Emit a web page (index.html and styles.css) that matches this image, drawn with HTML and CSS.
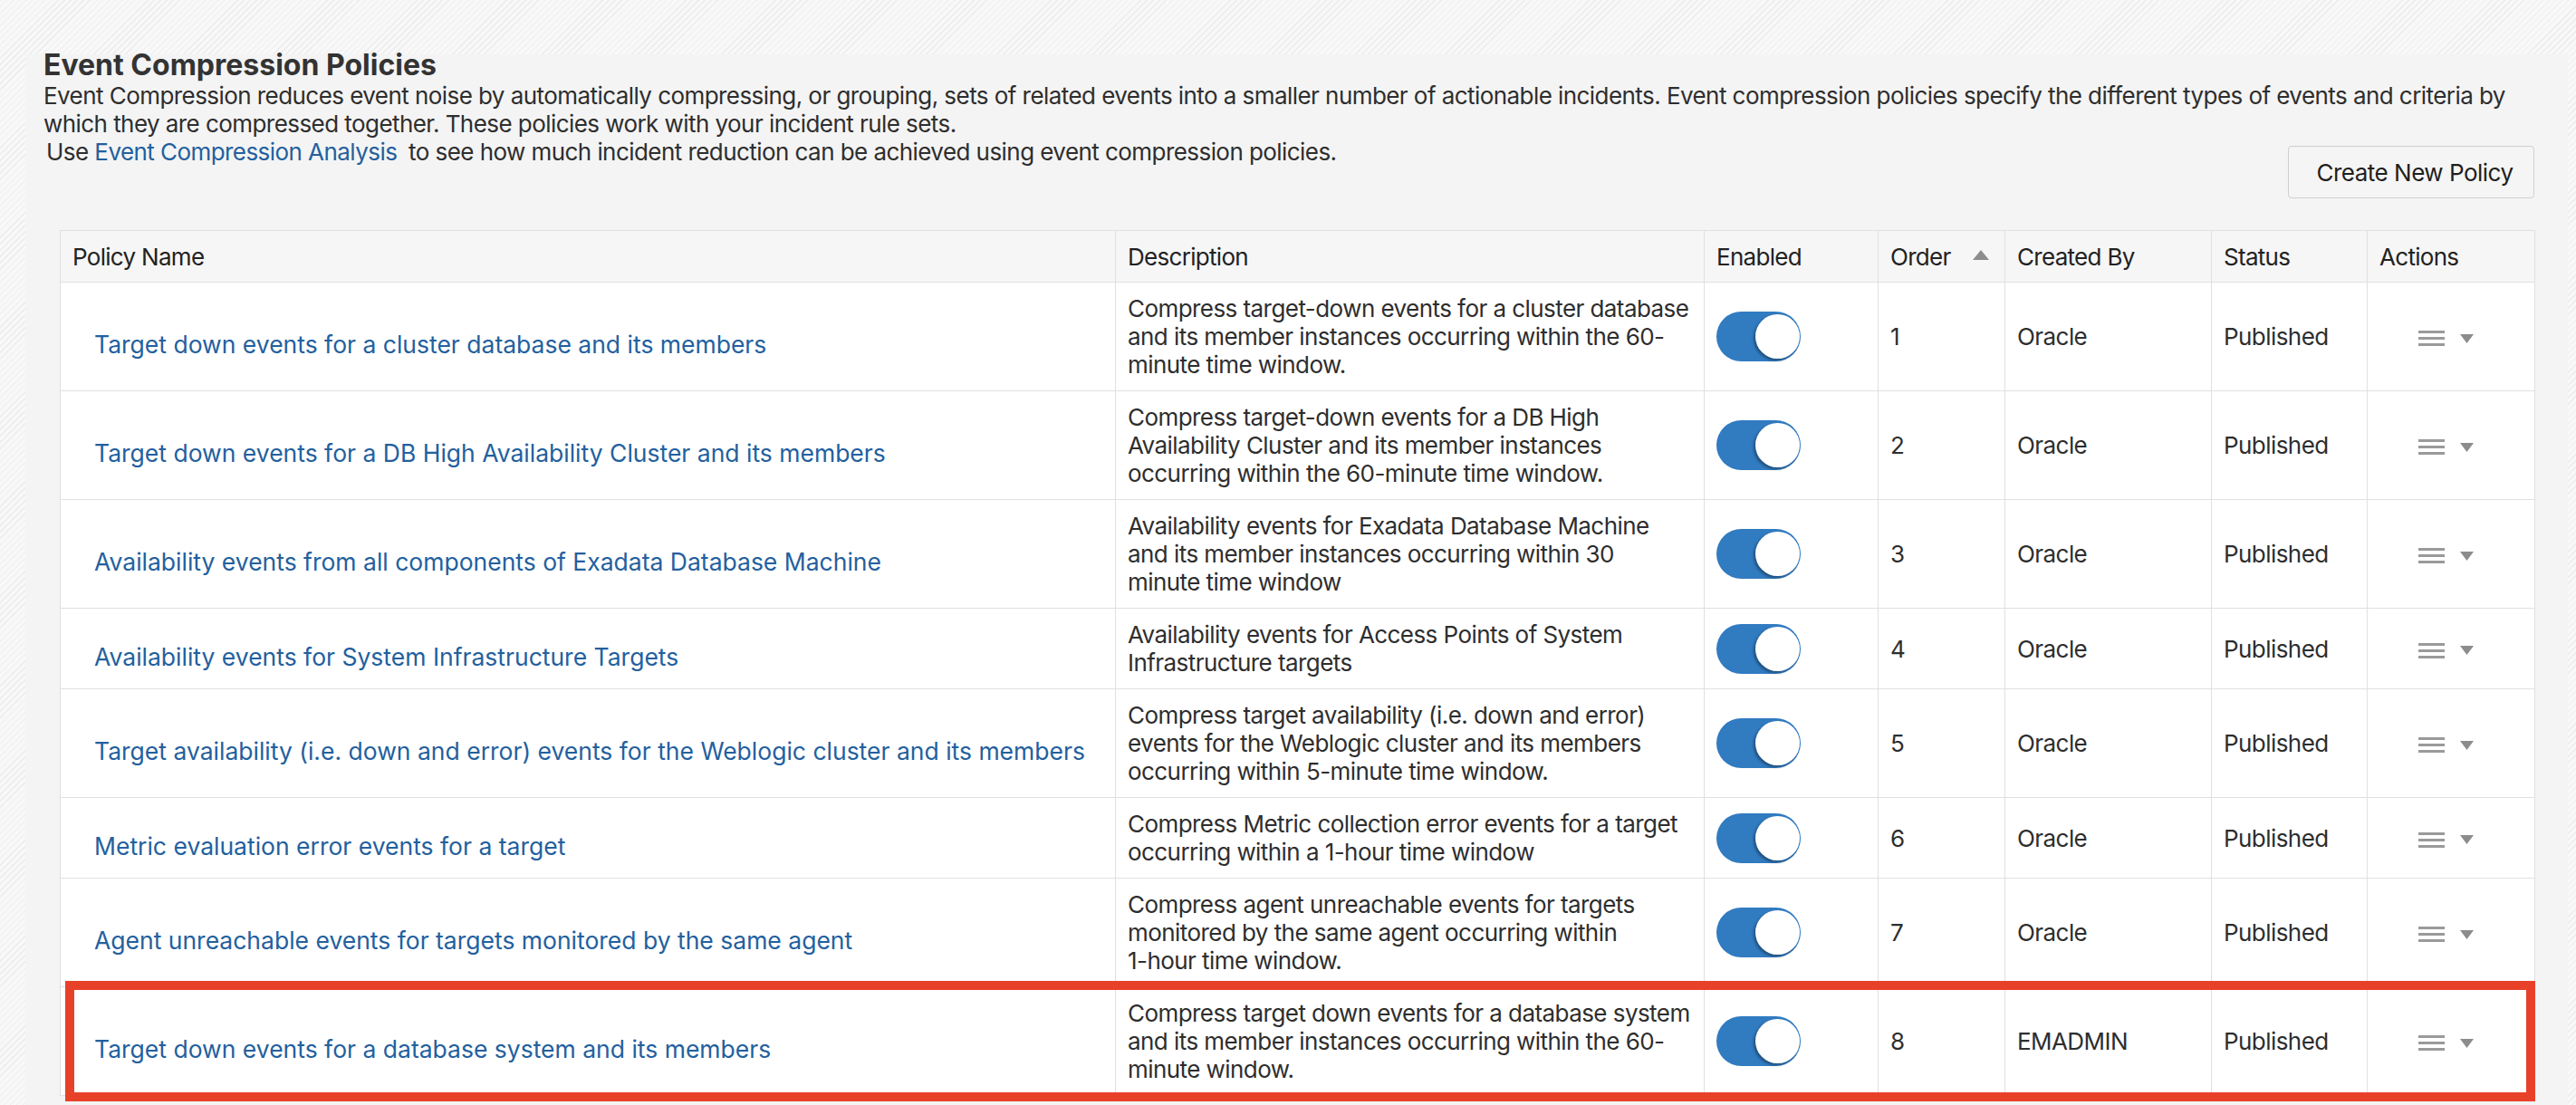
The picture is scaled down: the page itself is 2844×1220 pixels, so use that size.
FILE: index.html
```html
<!DOCTYPE html>
<html lang="en">
<head>
<meta charset="utf-8">
<title>Event Compression Policies</title>
<link rel="stylesheet" href="styles.css">
</head>
<body>
<main class="panel">
  <h1 class="title">Event Compression Policies</h1>
  <p class="intro">Event Compression reduces event noise by automatically compressing, or grouping, sets of related events into a smaller number of actionable incidents. Event compression policies specify the different types of events and criteria by<br>which they are compressed together. These policies work with your incident rule sets.</p>
  <div class="intro-row">
    <p class="intro-use">Use <a class="link analysis" href="#">Event Compression Analysis</a> to see how much incident reduction can be achieved using event compression policies.</p>
    <button class="btn" type="button">Create New Policy</button>
  </div>

  <div class="table-wrap">
    <table class="grid">
      <colgroup>
        <col class="c-name"><col class="c-desc"><col class="c-en"><col class="c-order"><col class="c-by"><col class="c-status"><col class="c-act">
      </colgroup>
      <thead>
        <tr>
          <th>Policy Name</th>
          <th>Description</th>
          <th>Enabled</th>
          <th><span class="sort">Order <svg class="sort-ic" width="18" height="11" viewBox="0 0 18 11"><polygon points="9,0 18,11 0,11" fill="#8c8c8c"/></svg></span></th>
          <th>Created By</th>
          <th>Status</th>
          <th>Actions</th>
        </tr>
      </thead>
      <tbody>
        <tr>
          <td class="name"><a class="link" href="#">Target down events for a cluster database and its members</a></td>
          <td class="desc">Compress target-down events for a cluster database<br>and its member instances occurring within the 60-<br>minute time window.</td>
          <td><span class="toggle"></span></td>
          <td>1</td><td>Oracle</td><td>Published</td>
          <td class="act"><span class="menu"><svg width="29" height="17" viewBox="0 0 29 17"><rect y="0" width="29" height="3" fill="#9a9a9a"/><rect y="7" width="29" height="3" fill="#9a9a9a"/><rect y="14" width="29" height="3" fill="#9a9a9a"/></svg><svg width="15" height="10" viewBox="0 0 15 10"><polygon points="0,0 15,0 7.5,10" fill="#8c8c8c"/></svg></span></td>
        </tr>
        <tr>
          <td class="name"><a class="link" href="#">Target down events for a DB High Availability Cluster and its members</a></td>
          <td class="desc">Compress target-down events for a DB High<br>Availability Cluster and its member instances<br>occurring within the 60-minute time window.</td>
          <td><span class="toggle"></span></td>
          <td>2</td><td>Oracle</td><td>Published</td>
          <td class="act"><span class="menu"><svg width="29" height="17" viewBox="0 0 29 17"><rect y="0" width="29" height="3" fill="#9a9a9a"/><rect y="7" width="29" height="3" fill="#9a9a9a"/><rect y="14" width="29" height="3" fill="#9a9a9a"/></svg><svg width="15" height="10" viewBox="0 0 15 10"><polygon points="0,0 15,0 7.5,10" fill="#8c8c8c"/></svg></span></td>
        </tr>
        <tr>
          <td class="name"><a class="link" href="#">Availability events from all components of Exadata Database Machine</a></td>
          <td class="desc">Availability events for Exadata Database Machine<br>and its member instances occurring within 30<br>minute time window</td>
          <td><span class="toggle"></span></td>
          <td>3</td><td>Oracle</td><td>Published</td>
          <td class="act"><span class="menu"><svg width="29" height="17" viewBox="0 0 29 17"><rect y="0" width="29" height="3" fill="#9a9a9a"/><rect y="7" width="29" height="3" fill="#9a9a9a"/><rect y="14" width="29" height="3" fill="#9a9a9a"/></svg><svg width="15" height="10" viewBox="0 0 15 10"><polygon points="0,0 15,0 7.5,10" fill="#8c8c8c"/></svg></span></td>
        </tr>
        <tr>
          <td class="name"><a class="link" href="#">Availability events for System Infrastructure Targets</a></td>
          <td class="desc">Availability events for Access Points of System<br>Infrastructure targets</td>
          <td><span class="toggle"></span></td>
          <td>4</td><td>Oracle</td><td>Published</td>
          <td class="act"><span class="menu"><svg width="29" height="17" viewBox="0 0 29 17"><rect y="0" width="29" height="3" fill="#9a9a9a"/><rect y="7" width="29" height="3" fill="#9a9a9a"/><rect y="14" width="29" height="3" fill="#9a9a9a"/></svg><svg width="15" height="10" viewBox="0 0 15 10"><polygon points="0,0 15,0 7.5,10" fill="#8c8c8c"/></svg></span></td>
        </tr>
        <tr>
          <td class="name"><a class="link" href="#">Target availability (i.e. down and error) events for the Weblogic cluster and its members</a></td>
          <td class="desc">Compress target availability (i.e. down and error)<br>events for the Weblogic cluster and its members<br>occurring within 5-minute time window.</td>
          <td><span class="toggle"></span></td>
          <td>5</td><td>Oracle</td><td>Published</td>
          <td class="act"><span class="menu"><svg width="29" height="17" viewBox="0 0 29 17"><rect y="0" width="29" height="3" fill="#9a9a9a"/><rect y="7" width="29" height="3" fill="#9a9a9a"/><rect y="14" width="29" height="3" fill="#9a9a9a"/></svg><svg width="15" height="10" viewBox="0 0 15 10"><polygon points="0,0 15,0 7.5,10" fill="#8c8c8c"/></svg></span></td>
        </tr>
        <tr>
          <td class="name"><a class="link" href="#">Metric evaluation error events for a target</a></td>
          <td class="desc">Compress Metric collection error events for a target<br>occurring within a 1-hour time window</td>
          <td><span class="toggle"></span></td>
          <td>6</td><td>Oracle</td><td>Published</td>
          <td class="act"><span class="menu"><svg width="29" height="17" viewBox="0 0 29 17"><rect y="0" width="29" height="3" fill="#9a9a9a"/><rect y="7" width="29" height="3" fill="#9a9a9a"/><rect y="14" width="29" height="3" fill="#9a9a9a"/></svg><svg width="15" height="10" viewBox="0 0 15 10"><polygon points="0,0 15,0 7.5,10" fill="#8c8c8c"/></svg></span></td>
        </tr>
        <tr>
          <td class="name"><a class="link" href="#">Agent unreachable events for targets monitored by the same agent</a></td>
          <td class="desc">Compress agent unreachable events for targets<br>monitored by the same agent occurring within<br>1-hour time window.</td>
          <td><span class="toggle"></span></td>
          <td>7</td><td>Oracle</td><td>Published</td>
          <td class="act"><span class="menu"><svg width="29" height="17" viewBox="0 0 29 17"><rect y="0" width="29" height="3" fill="#9a9a9a"/><rect y="7" width="29" height="3" fill="#9a9a9a"/><rect y="14" width="29" height="3" fill="#9a9a9a"/></svg><svg width="15" height="10" viewBox="0 0 15 10"><polygon points="0,0 15,0 7.5,10" fill="#8c8c8c"/></svg></span></td>
        </tr>
        <tr>
          <td class="name"><a class="link" href="#">Target down events for a database system and its members</a></td>
          <td class="desc">Compress target down events for a database system<br>and its member instances occurring within the 60-<br>minute window.</td>
          <td><span class="toggle"></span></td>
          <td>8</td><td>EMADMIN</td><td>Published</td>
          <td class="act"><span class="menu"><svg width="29" height="17" viewBox="0 0 29 17"><rect y="0" width="29" height="3" fill="#9a9a9a"/><rect y="7" width="29" height="3" fill="#9a9a9a"/><rect y="14" width="29" height="3" fill="#9a9a9a"/></svg><svg width="15" height="10" viewBox="0 0 15 10"><polygon points="0,0 15,0 7.5,10" fill="#8c8c8c"/></svg></span></td>
        </tr>
      </tbody>
    </table>
    <div class="highlight"></div>
  </div>
</main>
</body>
</html>
```

FILE: styles.css
```css
html, body {
  margin: 0;
  height: 100%;
}

body {
  padding: 60px 9px 0 28px;
  box-sizing: border-box;
  overflow: hidden;
  background-color: #f7f7f7;
  background-image: repeating-linear-gradient(135deg, #ececec 0 1px, #f8f8f8 1px 5px);
  font-family: Inter, "Noto Sans", "Liberation Sans", sans-serif;
  color: #2e2e2e;
}

.panel {
  background: #f4f4f4;
  min-height: 100%;
  padding: 0 37px 40px 20px;
  box-sizing: border-box;
}

.title {
  margin: 0;
  font-size: 32px;
  line-height: 24px;
  font-weight: 700;
  color: #333;
}

.intro,
.intro-use {
  margin: 0;
  font-size: 26px;
  line-height: 31px;
  letter-spacing: -0.56px;
  color: #2e2e2e;
}

.intro {
  margin-top: 6px;
  white-space: nowrap;
}

.intro-row {
  display: flex;
  justify-content: space-between;
  align-items: flex-start;
}

.intro-use {
  padding-left: 3px;
}

.link {
  color: #23609e;
  text-decoration: none;
}

.analysis {
  margin-right: 6px;
}

.btn {
  margin-top: 9px;
  height: 58px;
  width: 272px;
  padding: 0 14px 0 22px;
  border: 1px solid #cfcfcf;
  border-radius: 4px;
  background: #f5f5f5;
  font-family: inherit;
  font-size: 26px;
  letter-spacing: -0.5px;
  color: #1f1f1f;
}

.table-wrap {
  position: relative;
  margin: 35px 0 0 18px;
}

.grid {
  width: 100%;
  table-layout: fixed;
  border-collapse: collapse;
  background: #fff;
  font-size: 26px;
  line-height: 31px;
  letter-spacing: -0.56px;
}

.c-name { width: 1165px; }
.c-desc { width: 650px; }
.c-en { width: 192px; }
.c-order { width: 140px; }
.c-by { width: 228px; }
.c-status { width: 172px; }
.c-act { width: 185px; }

.grid th,
.grid td {
  border: 1px solid #e0e0e0;
  padding: 13px 13px;
  text-align: left;
  vertical-align: middle;
}

.grid th {
  background: #f6f6f6;
  font-weight: 400;
  color: #222;
  height: 57px;
  padding-top: 0;
  padding-bottom: 0;
  box-sizing: border-box;
  letter-spacing: -0.7px;
}

.grid td {
  color: #2e2e2e;
}

.grid td.name {
  padding-left: 37px;
  padding-top: 22px;
  padding-bottom: 4px;
}

.grid td.name .link {
  font-size: 26.5px;
  letter-spacing: 0;
}

.grid td.desc {
  white-space: nowrap;
}

.sort {
  display: flex;
  align-items: center;
  justify-content: space-between;
  padding-right: 4px;
}

.sort-ic {
  margin-top: -4px;
}

.toggle {
  display: block;
  position: relative;
  width: 93px;
  height: 55px;
  border-radius: 28px;
  background: #317bc1;
}

.toggle::after {
  content: "";
  position: absolute;
  top: 3px;
  right: 1px;
  width: 49px;
  height: 49px;
  border-radius: 50%;
  background: #fff;
  box-shadow: -2px 2px 3px rgba(0, 0, 0, 0.35);
}

.grid td.act {
  text-align: center;
  padding-right: 19px;
  padding-left: 7px;
}

.menu {
  display: inline-flex;
  align-items: center;
  gap: 17px;
  vertical-align: middle;
}

.menu svg {
  display: block;
}

.highlight {
  position: absolute;
  left: 6px;
  right: -1px;
  bottom: -6px;
  height: 133px;
  border: 10px solid #e8412a;
  box-sizing: border-box;
  pointer-events: none;
}
```
